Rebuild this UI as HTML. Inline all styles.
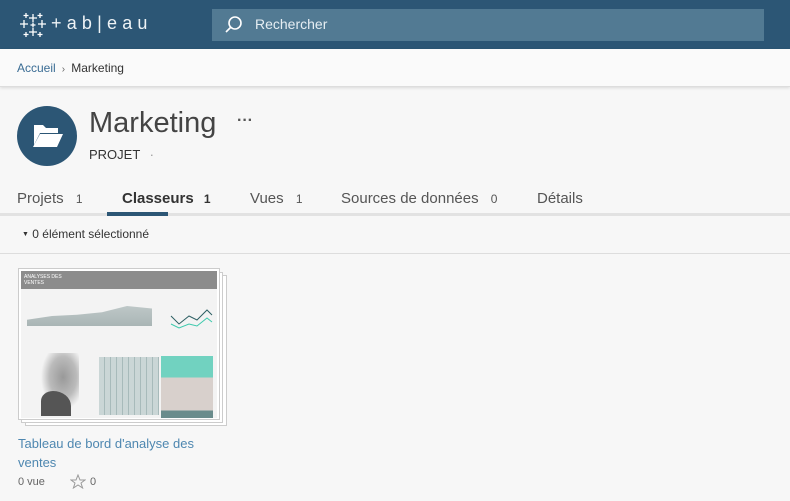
<!DOCTYPE html>
<html><head><meta charset="utf-8"><style>
*{margin:0;padding:0;box-sizing:border-box}
body{width:790px;height:501px;overflow:hidden;background:#f7f7f7;font-family:"Liberation Sans",sans-serif;position:relative}
.a{position:absolute}
.hdr{left:0;top:0;width:790px;height:49px;background:#2c5675}
.search{left:212px;top:9px;width:552px;height:32px;background:#527a93}
.bc{left:0;top:49px;width:790px;height:38px;background:#fafafa;border-bottom:1px solid #ddd;box-shadow:0 1px 3px rgba(0,0,0,.12)}
.t{white-space:nowrap}
</style></head><body>
<div class="a hdr"></div>
<svg class="a" style="left:18px;top:11px" width="30" height="28" viewBox="0 0 30 28" stroke="#fff" stroke-width="1.3" fill="none">
<path d="M15 3v8M11 7h8M15 17v8M11 21h8M6 9v8M2 13h8M24 9v8M20 13h8M8 2v5M5.5 4.5h5M22 2v5M19.5 4.5h5M8 21v5M5.5 23.5h5M22 21v5M19.5 23.5h5M15 11.5v5M12.5 14h5"/>
</svg>
<div class="a t" style="left:51px;top:13px;color:#eef3f6;font-size:18px;letter-spacing:5.2px">+ab|eau</div>
<div class="a search"></div>
<svg class="a" style="left:224px;top:15px" width="20" height="20" viewBox="0 0 20 20" fill="none" stroke="#fff" stroke-width="1.6"><circle cx="11" cy="8" r="6"/><path d="M7 12l-5 5"/></svg>
<div class="a t" style="left:255px;top:16px;color:#e6eef3;font-size:14px">Rechercher</div>
<div class="a bc"></div>
<div class="a t" style="left:17px;top:61px;font-size:12px;color:#3a6c94">Accueil <span style="color:#666;font-size:10px">&nbsp;›&nbsp;</span> <span style="color:#333">Marketing</span></div>
<div class="a" style="left:17px;top:106px;width:60px;height:60px;border-radius:50%;background:#2c5675"></div>
<svg class="a" style="left:32px;top:121px" width="32" height="30" viewBox="0 0 32 30" fill="#fff"><path d="M2 4h9l3 3h12v5H8L2 24z"/><path d="M8 13h23l-6 13H1z"/></svg>
<div class="a t" style="left:89px;top:107px;font-size:29px;color:#444">Marketing</div>
<div class="a t" style="left:237px;top:112px;font-size:16px;color:#555;font-weight:bold">···</div>
<div class="a t" style="left:89px;top:147px;font-size:13px;color:#333">PROJET <span style="color:#999;margin-left:6px">·</span></div>
<div class="a t" style="left:17px;top:190px;font-size:15px;color:#555">Projets <span style="font-size:12px;margin-left:8px">1</span></div>
<div class="a t" style="left:122px;top:190px;font-size:15px;color:#333;font-weight:bold">Classeurs <span style="font-size:12px;margin-left:6px">1</span></div>
<div class="a t" style="left:250px;top:190px;font-size:15px;color:#555">Vues <span style="font-size:12px;margin-left:8px">1</span></div>
<div class="a t" style="left:341px;top:190px;font-size:15px;color:#555">Sources de données <span style="font-size:12px;margin-left:8px">0</span></div>
<div class="a t" style="left:537px;top:190px;font-size:15px;color:#555">Détails</div>
<div class="a" style="left:0;top:213px;width:790px;height:3px;background:#e2e2e2"></div>
<div class="a" style="left:107px;top:212px;width:61px;height:4px;background:#2c5675"></div>
<div class="a t" style="left:22px;top:227px;font-size:12px;color:#333"><span style="font-size:7px;vertical-align:2px">▼</span> 0 élément sélectionné</div>
<div class="a" style="left:0;top:253px;width:790px;height:1px;background:#ddd"></div>
<div class="a" style="left:25px;top:275px;width:202px;height:151px;background:#fff;border:1px solid #ccc"></div>
<div class="a" style="left:21px;top:272px;width:202px;height:151px;background:#fff;border:1px solid #ccc"></div>
<div class="a" style="left:18px;top:268px;width:202px;height:152px;background:#fff;border:1px solid #ccc;padding:2px">
 <div style="width:196px;height:147px;background:#f3f3f3;position:relative;overflow:hidden">
  <div class="a" style="left:0;top:0;width:196px;height:18px;background:#8c8c8c"></div>
  <div class="a t" style="left:3px;top:3px;font-size:5px;color:#fff;line-height:6px">ANALYSES DES<br>VENTES</div>
  <div class="a" style="left:6px;top:30px;width:125px;height:25px;background:linear-gradient(0deg,#a9b5b5 0,#c3cccc 100%);clip-path:polygon(0 100%,0 75%,20% 60%,40% 55%,60% 45%,80% 20%,100% 30%,100% 100%)"></div>
  <svg class="a" style="left:148px;top:35px" width="45" height="25"><path d="M2 10l8 8 10-8 8 4 10-10 5 5" stroke="#2d5f63" fill="none"/><path d="M2 18l8 4 10-4 8 2 10-8 5 4" stroke="#3cc9ac" fill="none"/></svg>
  <div class="a" style="left:18px;top:82px;width:40px;height:60px;background:radial-gradient(ellipse at 60% 40%,#999 0,#bbb 40%,transparent 65%)"></div>
  <div class="a" style="left:20px;top:120px;width:30px;height:25px;background:#555;border-radius:40% 60% 0 0"></div>
  <div class="a" style="left:78px;top:86px;width:60px;height:58px;background:repeating-linear-gradient(90deg,#c6d3d3 0 5px,#9fb4b4 5px 6px),#c6d3d3;opacity:.9"></div>
  <div class="a" style="left:140px;top:85px;width:52px;height:62px;background:linear-gradient(#71d2c0 0 35%,#d8d0cc 35% 88%,#6a8c8c 88%)"></div>
 </div>
</div>
<div class="a" style="left:18px;top:434px;font-size:13px;color:#4e87b0;line-height:19px;width:200px">Tableau de bord d'analyse des ventes</div>
<div class="a t" style="left:18px;top:476px;font-size:11px;color:#666">0 vue</div>
<svg class="a" style="left:70px;top:474px" width="16" height="15" viewBox="0 0 16 15"><path d="M8 1l2 5h5l-4 3 1.6 5L8 11l-4.6 3L5 9 1 6h5z" fill="none" stroke="#999"/></svg>
<div class="a t" style="left:90px;top:476px;font-size:11px;color:#666">0</div>
</body></html>
